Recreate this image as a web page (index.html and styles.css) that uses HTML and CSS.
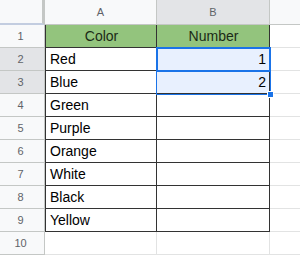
FILE: index.html
```html
<!DOCTYPE html>
<html>
<head>
<meta charset="utf-8">
<link rel="stylesheet" href="styles.css">
</head>
<body>
<div class="sheet">
  <div class="grid">
    <div class="corner"></div>
    <div class="colhead">A</div>
    <div class="colhead sel">B</div>
    <div class="colhead last"></div>

    <div class="rowhead">1</div>
    <div class="cell a t head">Color</div>
    <div class="cell b t head">Number</div>
    <div class="cell c"></div>

    <div class="rowhead sel">2</div>
    <div class="cell a t">Red</div>
    <div class="cell b t num picked">1</div>
    <div class="cell c"></div>

    <div class="rowhead sel">3</div>
    <div class="cell a t">Blue</div>
    <div class="cell b t num picked">2</div>
    <div class="cell c"></div>

    <div class="rowhead">4</div>
    <div class="cell a t">Green</div>
    <div class="cell b t"></div>
    <div class="cell c"></div>

    <div class="rowhead">5</div>
    <div class="cell a t">Purple</div>
    <div class="cell b t"></div>
    <div class="cell c"></div>

    <div class="rowhead">6</div>
    <div class="cell a t">Orange</div>
    <div class="cell b t"></div>
    <div class="cell c"></div>

    <div class="rowhead">7</div>
    <div class="cell a t">White</div>
    <div class="cell b t"></div>
    <div class="cell c"></div>

    <div class="rowhead">8</div>
    <div class="cell a t">Black</div>
    <div class="cell b t"></div>
    <div class="cell c"></div>

    <div class="rowhead">9</div>
    <div class="cell a t">Yellow</div>
    <div class="cell b t"></div>
    <div class="cell c"></div>

    <div class="rowhead">10</div>
    <div class="cell a"></div>
    <div class="cell b"></div>
    <div class="cell c"></div>
  </div>
  <div class="selection"></div>
  <div class="active"></div>
  <div class="handle"></div>
</div>
</body>
</html>
```

FILE: styles.css
```css
html, body {
  margin: 0;
  padding: 0;
  background: #ffffff;
}

.sheet {
  position: relative;
  width: 300px;
  height: 255px;
  overflow: hidden;
  font-family: "Liberation Sans", Arial, sans-serif;
}

.grid {
  display: grid;
  grid-template-columns: 45px 112px 113px 30px;
  grid-template-rows: 25px repeat(10, 23px);
}

.grid > div {
  box-sizing: border-box;
  display: flex;
  align-items: center;
  overflow: hidden;
  white-space: nowrap;
}

.corner {
  background: #f8f9fa;
  border-right: 3px solid #c4c7c5;
  border-bottom: 2px solid #c3cde0;
}

.colhead {
  justify-content: center;
  background: #f8f9fa;
  color: #5f6368;
  font-size: 11px;
  border-right: 1px solid #c4c7c5;
  border-bottom: 1px solid #c4c7c5;
}

.colhead.sel {
  background: #e3e4e7;
}

.colhead.last {
  border-right: none;
}

.rowhead {
  justify-content: center;
  background: #f8f9fa;
  color: #5f6368;
  font-size: 11px;
  border-right: 1px solid #c4c7c5;
  border-bottom: 1px solid #c4c7c5;
  padding-right: 3px;
}

.rowhead.sel {
  background: #e3e4e7;
}

.cell {
  font-size: 14px;
  color: #000000;
  padding: 0 3px 0 4px;
  border-right: 1px solid #e2e3e3;
  border-bottom: 1px solid #e2e3e3;
}

.cell.c {
  border-right: none;
}

.cell.t {
  border-right-color: #333333;
  border-bottom-color: #333333;
}

.cell.a.t {
  border-left: 1px solid #333333;
}

.cell.head {
  justify-content: center;
  background: #93c47d;
  color: #1b2a16;
}

.cell.num {
  justify-content: flex-end;
}

.cell.picked {
  background: #e8f0fe;
}

.selection {
  position: absolute;
  left: 156px;
  top: 47px;
  width: 113px;
  height: 46px;
  border: 1px solid #1a73e8;
}

.active {
  position: absolute;
  left: 156px;
  top: 47px;
  width: 111px;
  height: 21px;
  border: 2px solid #1a73e8;
}

.handle {
  position: absolute;
  left: 267px;
  top: 91px;
  width: 6px;
  height: 6px;
  background: #1a73e8;
  border: 1px solid #ffffff;
  box-sizing: border-box;
  width: 7px;
  height: 7px;
}
```
